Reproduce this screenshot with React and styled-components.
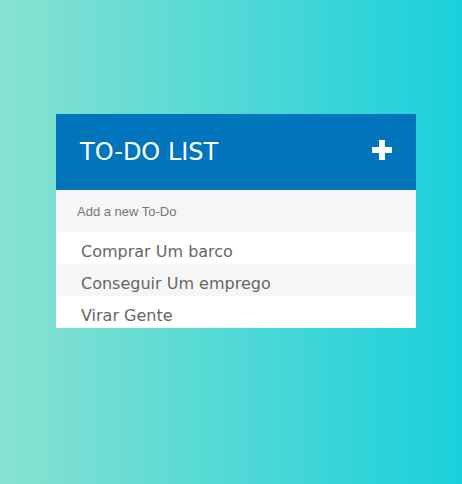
import React from "react";
import styled, { createGlobalStyle } from "styled-components";

const todos = ["Comprar Um barco", "Conseguir Um emprego", "Virar Gente"];

const GlobalStyle = createGlobalStyle`
  html, body {
    margin: 0;
    padding: 0;
  }
  body {
    font-family: "DejaVu Sans", sans-serif;
  }
`;

const App = () => {
  return (
    <>
      <GlobalStyle />
      <Page>
        <Card>
          <Header>
            <Title>TO-DO LIST</Title>
            <AddButton type="button" aria-label="Add">
              <svg width="20" height="20" viewBox="0 0 20 20">
                <path d="M7 0h6v7h7v6h-7v7H7v-7H0V7h7z" fill="#fff" />
              </svg>
            </AddButton>
          </Header>
          <NewTodo placeholder="Add a new To-Do" />
          <List>
            {todos.map((todo, i) => (
              <Item key={todo} $striped={i % 2 === 1}>
                {todo}
              </Item>
            ))}
          </List>
        </Card>
      </Page>
    </>
  );
};

export default App;

const Page = styled.div`
  min-height: 484px;
  box-sizing: border-box;
  padding: 114px 0 0 56px;
  background: linear-gradient(to right, #88e2d0, #1ad0dc);
`;

const Card = styled.div`
  width: 360px;
  background: #fff;
`;

const Header = styled.div`
  height: 76px;
  box-sizing: border-box;
  background: #0075bb;
  display: flex;
  align-items: center;
  justify-content: space-between;
  padding: 0 24px 0 24px;
`;

const Title = styled.h1`
  margin: 0;
  font-weight: normal;
  font-size: 24px;
  color: #fff;
`;

const AddButton = styled.button`
  border: 0;
  background: none;
  padding: 0;
  margin-bottom: 4px;
  display: flex;
  cursor: pointer;
`;

const NewTodo = styled.input`
  display: block;
  width: 100%;
  height: 42px;
  box-sizing: border-box;
  border: 0;
  outline: none;
  background: #f6f6f6;
  padding: 0 20px 0 21px;
  font-family: "Liberation Sans", Arial, sans-serif;
  font-size: 13px;
  color: #555;

  &::placeholder {
    color: #777;
  }
`;

const List = styled.ul`
  list-style: none;
  margin: 0;
  padding: 0;
`;

const Item = styled.li`
  height: 32px;
  box-sizing: border-box;
  padding: 8px 0 0 25px;
  line-height: 24px;
  font-size: 16px;
  color: #666;
  background: ${(p) => (p.$striped ? "#f6f6f6" : "#fff")};
`;
